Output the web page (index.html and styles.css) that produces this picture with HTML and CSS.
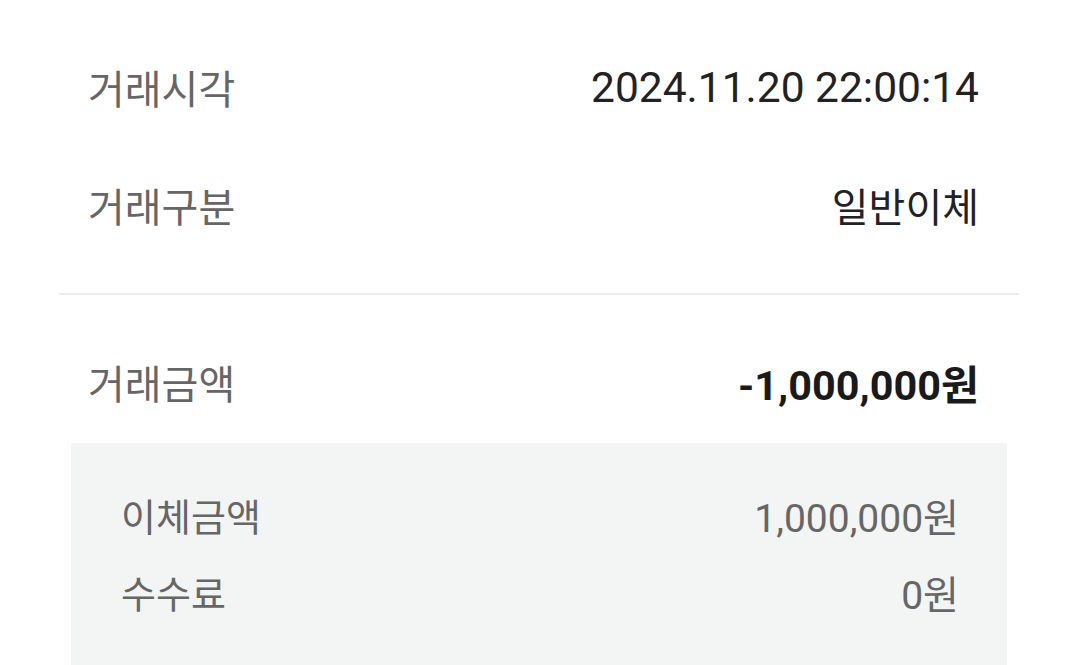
FILE: index.html
```html
<!DOCTYPE html>
<html lang="ko">
<head>
<meta charset="utf-8">
<link rel="stylesheet" href="styles.css">
</head>
<body>
<main class="page">
  <div class="row">
    <span class="label">거래시각</span>
    <span class="value num">2024.11.20 22:00:14</span>
  </div>
  <div class="row">
    <span class="label">거래구분</span>
    <span class="value">일반이체</span>
  </div>
  <hr class="divider">
  <div class="row">
    <span class="label">거래금액</span>
    <span class="value strong">-1,000,000원</span>
  </div>
  <div class="detail">
    <div class="drow">
      <span class="dlabel">이체금액</span>
      <span class="dvalue">1,000,000원</span>
    </div>
    <div class="drow">
      <span class="dlabel">수수료</span>
      <span class="dvalue">0원</span>
    </div>
  </div>
</main>
</body>
</html>
```

FILE: styles.css
```css
html, body {
  margin: 0;
  padding: 0;
  background: #ffffff;
}
body {
  font-family: Roboto, "Noto Sans CJK KR", sans-serif;
  overflow: hidden;
}
.page {
  padding: 28px 60px 0 59px;
}
.row {
  height: 118px;
  display: flex;
  align-items: center;
  justify-content: space-between;
  padding: 0 40px 0 29px;
}
.label {
  font-size: 40px;
  color: #666666;
}
.value {
  font-size: 40px;
  color: #222222;
}
.num {
  font-size: 42.5px;
}
.strong {
  font-size: 41.4px;
  font-weight: 700;
  color: #1a1a1a;
}
.divider {
  border: 0;
  height: 2px;
  background: #ececec;
  margin: 29px 0 28px;
}
.detail {
  margin: 2px 12px 0;
  background: #f3f4f4;
  padding: 33px 48px 60px 50px;
}
.drow {
  height: 77px;
  display: flex;
  align-items: center;
  justify-content: space-between;
}
.dlabel {
  font-size: 38px;
  color: #666666;
}
.dvalue {
  font-size: 39px;
  color: #666666;
}
```
